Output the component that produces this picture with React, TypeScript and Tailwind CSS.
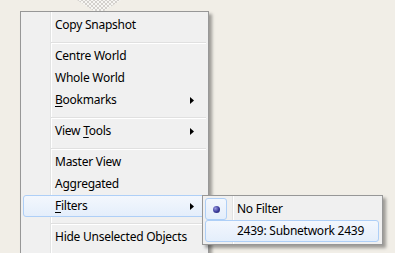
import React from "react";

type Item =
  | { kind: "sep" }
  | { kind: "item"; label: React.ReactNode; sub?: boolean; active?: boolean };

const font = { fontFamily: '"Noto Sans", "Open Sans", sans-serif' };

function U({ c }: { c: string }) {
  return <span className="underline underline-offset-[2px] decoration-1">{c}</span>;
}

const items: Item[] = [
  { kind: "item", label: "Copy Snapshot" },
  { kind: "sep" },
  { kind: "item", label: "Centre World" },
  { kind: "item", label: "Whole World" },
  { kind: "item", label: <><U c="B" />ookmarks</>, sub: true },
  { kind: "sep" },
  { kind: "item", label: <>View <U c="T" />ools</>, sub: true },
  { kind: "sep" },
  { kind: "item", label: "Master View" },
  { kind: "item", label: "Aggregated" },
  { kind: "item", label: <><U c="F" />ilters</>, sub: true, active: true },
  { kind: "sep" },
  { kind: "item", label: "Hide Unselected Objects" },
];

const hot =
  "border-[#aecff7] bg-[linear-gradient(to_bottom,#f3f7fd,#e4eefb)]";

function Arrow() {
  return (
    <svg width="4" height="7" viewBox="0 0 4 7" className="ml-auto mr-[11px] shrink-0">
      <path d="M0 0 L4 3.5 L0 7 Z" fill="#000" />
    </svg>
  );
}

function Hatch() {
  return (
    <svg width="50" height="12" viewBox="0 0 50 12" className="absolute left-[74px] top-0">
      <defs>
        <clipPath id="v">
          <polygon points="3,0 47,0 30,11 20,11" />
        </clipPath>
      </defs>
      <g clipPath="url(#v)">
        <rect width="50" height="12" fill="#f7f6f3" />
        {Array.from({ length: 20 }).map((_, i) => (
          <g key={i} stroke="#c9c7c2" strokeWidth="0.8">
            <line x1={i * 4 - 20} y1="0" x2={i * 4 - 8} y2="12" />
            <line x1={i * 4 - 20} y1="12" x2={i * 4 - 8} y2="0" />
          </g>
        ))}
      </g>
    </svg>
  );
}

export default function App() {
  return (
    <div
      className="relative w-[395px] h-[253px] overflow-hidden bg-[#f1eee7] text-[12px] tracking-[-0.25px] text-black"
      style={font}
    >
      <Hatch />

      {/* main context menu */}
      <div className="absolute left-[20px] top-[11px] w-[189px] flex flex-col bg-[#f0f0f0] border border-[#979797] pt-[2px] pb-[12px] shadow-[3px_3px_3px_rgba(0,0,0,0.35)]">
        <div className="absolute top-0 bottom-0 left-[29px] w-[2px] border-l border-[#e2e3e3] border-r border-r-white" />
        {items.map((it, i) =>
          it.kind === "sep" ? (
            <div key={i} className="relative h-[9px] pt-[6px] pl-[30px] pr-[2px]">
              <div className="h-[1px] bg-[#e0e0e0] border-b border-white box-content" />
            </div>
          ) : (
            <div
              key={i}
              className={`relative mx-[2px] h-[22px] rounded-[3px] border flex items-center pl-[31px] leading-none ${
                it.active ? hot : "border-transparent"
              }`}
            >
              <span className="-mt-[1px]">{it.label}</span>
              {it.sub && <Arrow />}
            </div>
          )
        )}
      </div>

      {/* filters submenu */}
      <div className="absolute left-[202px] top-[195px] w-[181px] flex flex-col bg-[#f0f0f0] border border-[#979797] py-[2px] shadow-[3px_3px_3px_rgba(0,0,0,0.35)]">
        <div className="absolute top-0 bottom-0 left-[29px] w-[2px] border-l border-[#e2e3e3] border-r border-r-white" />
        <div className="relative ml-[2px] mr-[3px] h-[22px] flex items-center gap-[10px]">
          <div className={`w-[22px] h-[22px] rounded-[3px] border flex items-center justify-center ${hot}`}>
            <div className="w-[7px] h-[7px] rounded-full bg-[radial-gradient(circle_at_35%_35%,#9a9ae0,#3a3a9a_55%,#1c1c5c)]" />
          </div>
          <span className="-mt-[1px] leading-none">No Filter</span>
        </div>
        <div className={`relative ml-[2px] mr-[3px] h-[22px] rounded-[3px] border flex items-center pl-[31px] ${hot}`}>
          <span className="-mt-[1px] leading-none">2439: Subnetwork 2439</span>
        </div>
      </div>
    </div>
  );
}
